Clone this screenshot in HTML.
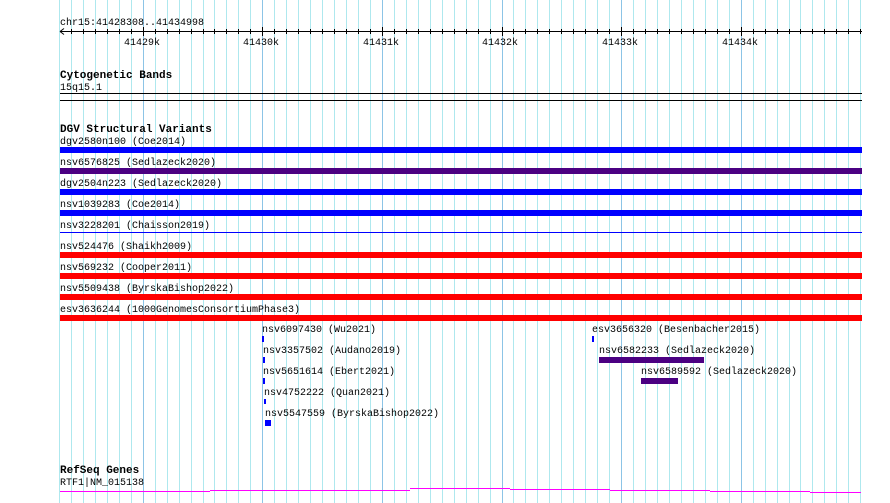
<!DOCTYPE html>
<html><head><style>
html,body{margin:0;padding:0;background:#fff;width:890px;height:503px;overflow:hidden}
svg{display:block}
text{font-family:"Liberation Mono",monospace;font-size:10px;fill:#000}
.b{font-weight:bold;font-size:11px}
</style></head><body>
<svg width="890" height="503" xmlns="http://www.w3.org/2000/svg">
<path stroke="#aee8ee" fill="none" d="M59.5 0V503M71.5 0V503M83.5 0V503M95.5 0V503M107.5 0V503M119.5 0V503M131.5 0V503M155.5 0V503M167.5 0V503M179.5 0V503M191.5 0V503M203.5 0V503M214.5 0V503M226.5 0V503M238.5 0V503M250.5 0V503M274.5 0V503M286.5 0V503M298.5 0V503M310.5 0V503M322.5 0V503M334.5 0V503M346.5 0V503M358.5 0V503M370.5 0V503M394.5 0V503M406.5 0V503M418.5 0V503M430.5 0V503M442.5 0V503M454.5 0V503M466.5 0V503M478.5 0V503M490.5 0V503M513.5 0V503M525.5 0V503M537.5 0V503M549.5 0V503M561.5 0V503M573.5 0V503M585.5 0V503M597.5 0V503M609.5 0V503M633.5 0V503M645.5 0V503M657.5 0V503M669.5 0V503M681.5 0V503M693.5 0V503M705.5 0V503M717.5 0V503M729.5 0V503M753.5 0V503M765.5 0V503M777.5 0V503M789.5 0V503M800.5 0V503M812.5 0V503M824.5 0V503M836.5 0V503M848.5 0V503M860.5 0V503"/>
<path stroke="#8cc4e6" fill="none" d="M143.5 0V503M262.5 0V503M382.5 0V503M502.5 0V503M621.5 0V503M741.5 0V503"/>
<!-- ruler -->
<text x="60" y="25">chr15:41428308..41434998</text>
<line x1="60" y1="31.5" x2="862" y2="31.5" stroke="#000"/>
<path d="M60 31.5 L64 28.5 M60 31.5 L64 34.5" stroke="#000" fill="none"/>
<path stroke="#000" fill="none" d="M71.5 29V34M83.5 29V34M95.5 29V34M107.5 29V34M119.5 29V34M131.5 29V34M155.5 29V34M167.5 29V34M179.5 29V34M191.5 29V34M203.5 29V34M214.5 29V34M226.5 29V34M238.5 29V34M250.5 29V34M274.5 29V34M286.5 29V34M298.5 29V34M310.5 29V34M322.5 29V34M334.5 29V34M346.5 29V34M358.5 29V34M370.5 29V34M394.5 29V34M406.5 29V34M418.5 29V34M430.5 29V34M442.5 29V34M454.5 29V34M466.5 29V34M478.5 29V34M490.5 29V34M513.5 29V34M525.5 29V34M537.5 29V34M549.5 29V34M561.5 29V34M573.5 29V34M585.5 29V34M597.5 29V34M609.5 29V34M633.5 29V34M645.5 29V34M657.5 29V34M669.5 29V34M681.5 29V34M693.5 29V34M705.5 29V34M717.5 29V34M729.5 29V34M753.5 29V34M765.5 29V34M777.5 29V34M789.5 29V34M800.5 29V34M812.5 29V34M824.5 29V34M836.5 29V34M848.5 29V34M860.5 29V34M143.5 27V36M262.5 27V36M382.5 27V36M502.5 27V36M621.5 27V36M741.5 27V36"/>
<text x="124" y="45">41429k</text>
<text x="243" y="45">41430k</text>
<text x="363" y="45">41431k</text>
<text x="482" y="45">41432k</text>
<text x="602" y="45">41433k</text>
<text x="722" y="45">41434k</text>

<text class="b" x="60" y="78">Cytogenetic Bands</text>
<text x="60" y="90">15q15.1</text>
<rect x="60" y="93" width="802" height="1" fill="#000"/>
<rect x="60" y="100" width="802" height="1" fill="#000"/>

<text class="b" x="60" y="132">DGV Structural Variants</text>
<text x="60" y="144">dgv2580n100 (Coe2014)</text>
<rect x="60" y="147" width="802" height="6" fill="#0000ff"/>
<text x="60" y="165">nsv6576825 (Sedlazeck2020)</text>
<rect x="60" y="168" width="802" height="6" fill="#4b0082"/>
<text x="60" y="186">dgv2504n223 (Sedlazeck2020)</text>
<rect x="60" y="189" width="802" height="6" fill="#0000ff"/>
<text x="60" y="207">nsv1039283 (Coe2014)</text>
<rect x="60" y="210" width="802" height="6" fill="#0000ff"/>
<text x="60" y="228">nsv3228201 (Chaisson2019)</text>
<rect x="60" y="232" width="802" height="1" fill="#0000ff"/>
<text x="60" y="249">nsv524476 (Shaikh2009)</text>
<rect x="60" y="252" width="802" height="6" fill="#ff0000"/>
<text x="60" y="270">nsv569232 (Cooper2011)</text>
<rect x="60" y="273" width="802" height="6" fill="#ff0000"/>
<text x="60" y="291">nsv5509438 (ByrskaBishop2022)</text>
<rect x="60" y="294" width="802" height="6" fill="#ff0000"/>
<text x="60" y="312">esv3636244 (1000GenomesConsortiumPhase3)</text>
<rect x="60" y="315" width="802" height="6" fill="#ff0000"/>

<text x="262" y="332">nsv6097430 (Wu2021)</text>
<rect x="262" y="336" width="2" height="6" fill="#0000ff"/>
<text x="263" y="353">nsv3357502 (Audano2019)</text>
<rect x="263" y="357" width="2" height="6" fill="#0000ff"/>
<text x="263" y="374">nsv5651614 (Ebert2021)</text>
<rect x="263" y="378" width="2" height="6" fill="#0000ff"/>
<text x="264" y="395">nsv4752222 (Quan2021)</text>
<rect x="264" y="399" width="2" height="5" fill="#0000ff"/>
<text x="265" y="416">nsv5547559 (ByrskaBishop2022)</text>
<rect x="265" y="420" width="6" height="6" fill="#0000ff"/>

<text x="592" y="332">esv3656320 (Besenbacher2015)</text>
<rect x="592" y="336" width="2" height="6" fill="#0000ff"/>
<text x="599" y="353">nsv6582233 (Sedlazeck2020)</text>
<rect x="599" y="357" width="105" height="6" fill="#4b0082"/>
<text x="641" y="374">nsv6589592 (Sedlazeck2020)</text>
<rect x="641" y="378" width="37" height="6" fill="#4b0082"/>

<text class="b" x="60" y="473">RefSeq Genes</text>
<text x="60" y="485">RTF1|NM_015138</text>
<path d="M60 491.5H210 M210 490.5H410 M410 488.5H510 M510 489.5H610 M610 490.5H710 M710 491.5H810 M810 492.5H861" stroke="#ff00ff" fill="none"/>
</svg>
</body></html>
